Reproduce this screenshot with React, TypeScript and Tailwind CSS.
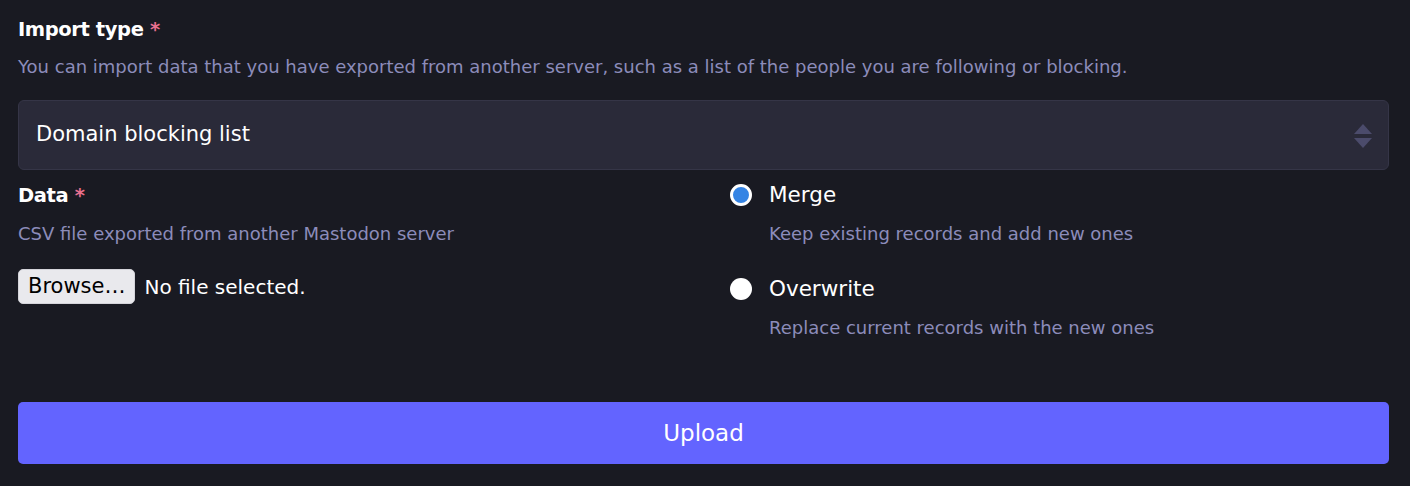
import { useState } from 'react'

const font = { fontFamily: '"DejaVu Sans", sans-serif' }

function Radio({ checked, label, hint, onSelect }: { checked: boolean; label: string; hint: string; onSelect: () => void }) {
  return (
    <label className="flex cursor-pointer items-start gap-[17px]" onClick={onSelect}>
      <span
        className={`mt-[2px] h-[22px] w-[22px] shrink-0 rounded-full ${
          checked ? 'border-[3px] border-white bg-[#3584e4]' : 'bg-white'
        }`}
      />
      <span className="flex flex-col">
        <span className="text-[21.5px] leading-[26px] text-white">{label}</span>
        <span className="mt-[15px] text-[18px] leading-[22px] text-[#8c8cba]">{hint}</span>
      </span>
    </label>
  )
}

export default function App() {
  const [mode, setMode] = useState<'merge' | 'overwrite'>('merge')

  return (
    <div className="min-h-[486px] bg-[#191a22] pl-[18px] pr-[21px] pt-[16px]" style={font}>
      {/* Import type */}
      <div>
        <div className="text-[19.5px] font-bold leading-[28px] tracking-[-0.4px] text-white">
          Import type <span className="text-[#e8708f]">*</span>
        </div>
        <p className="mt-[12px] text-[18px] leading-[22px] text-[#8c8cba]">
          You can import data that you have exported from another server, such as a list of the people you are following or blocking.
        </p>
        <div className="relative mt-[22px] flex h-[70px] items-center rounded-[6px] border border-[#353547] bg-[#2a2a39] pl-[17px]">
          <span className="text-[21px] text-white">Domain blocking list</span>
          <svg className="absolute right-[15px] top-[23px]" width="20" height="24" viewBox="0 0 20 24">
            <polygon points="10,0 19,10 1,10" fill="#4b4b6b" />
            <polygon points="1,14 19,14 10,24" fill="#4b4b6b" />
          </svg>
        </div>
      </div>

      {/* Data + mode */}
      <div className="mt-[12px] grid grid-cols-[712px_1fr]">
        <div>
          <div className="text-[19.5px] font-bold leading-[28px] tracking-[-0.4px] text-white">
            Data <span className="text-[#e8708f]">*</span>
          </div>
          <p className="mt-[13px] text-[18px] leading-[22px] text-[#8c8cba]">
            CSV file exported from another Mastodon server
          </p>
          <div className="mt-[24px] flex items-center gap-[9px]">
            <button className="h-[35px] rounded-[5px] border border-[#d4d4da] bg-[#e9e9ed] px-[9px] text-[21px] leading-none text-black">
              Browse…
            </button>
            <span className="text-[20px] text-white">No file selected.</span>
          </div>
        </div>
        <div className="flex flex-col gap-[31px]">
          <Radio
            checked={mode === 'merge'}
            label="Merge"
            hint="Keep existing records and add new ones"
            onSelect={() => setMode('merge')}
          />
          <Radio
            checked={mode === 'overwrite'}
            label="Overwrite"
            hint="Replace current records with the new ones"
            onSelect={() => setMode('overwrite')}
          />
        </div>
      </div>

      <button className="mt-[63px] h-[62px] w-full rounded-[5px] bg-[#6364ff] text-[23px] text-white">
        Upload
      </button>
    </div>
  )
}
